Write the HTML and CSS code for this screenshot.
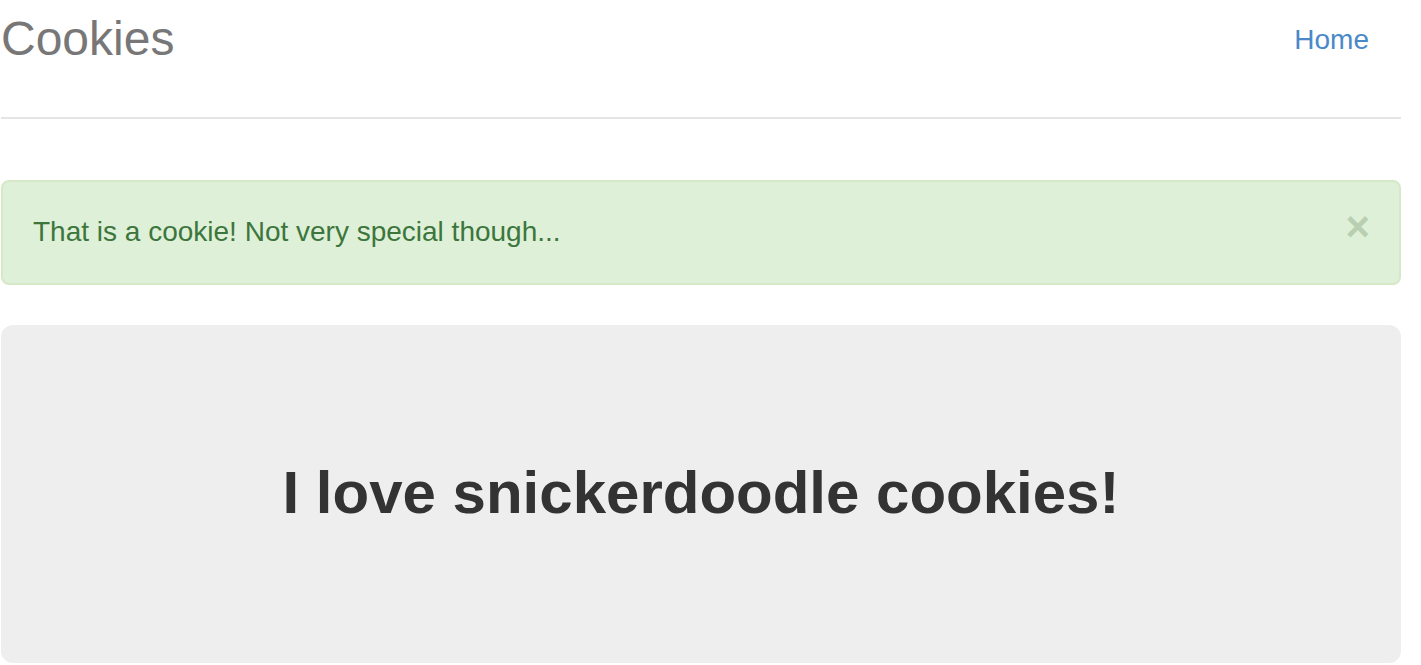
FILE: index.html
```html
<!DOCTYPE html>
<html lang="en">
<head>
<meta charset="utf-8">
<title>Cookies</title>
<link rel="stylesheet" href="styles.css">
</head>
<body>
<div class="container">
  <header class="header">
    <h3 class="brand">Cookies</h3>
    <nav>
      <ul class="nav">
        <li><a href="#">Home</a></li>
      </ul>
    </nav>
  </header>

  <div class="alert">
    <span class="alert-text">That is a cookie! Not very special though...</span>
    <button class="close" type="button" aria-label="Close">&times;</button>
  </div>

  <div class="jumbotron">
    <h1>I love snickerdoodle cookies!</h1>
  </div>
</div>
</body>
</html>
```

FILE: styles.css
```css
html, body {
  margin: 0;
  padding: 0;
  background: #fff;
}

body {
  font-family: "Liberation Sans", Arial, sans-serif;
  color: #333;
}

.container {
  width: 1400px;
  margin-left: 1px;
}

.header {
  display: flex;
  justify-content: space-between;
  align-items: flex-start;
  height: 78px;
  padding-bottom: 39px;
  border-bottom: 2px solid #e5e5e5;
  margin-bottom: 61px;
}

.brand {
  margin: 0;
  font-size: 48px;
  font-weight: 400;
  line-height: 78px;
  color: #777;
}

.nav {
  list-style: none;
  margin: 0;
  padding: 0;
}

.nav a {
  display: block;
  padding: 20px 32px 18px 30px;
  font-size: 28px;
  line-height: 40px;
  color: #4a89c8;
  text-decoration: none;
}

.alert {
  display: flex;
  justify-content: space-between;
  align-items: flex-start;
  padding: 30px 29px 29px 30px;
  border: 2px solid #d6e9c6;
  border-radius: 8px;
  background: #dff0d8;
  color: #3c763d;
  margin-bottom: 40px;
}

.alert-text {
  font-size: 28px;
  line-height: 40px;
}

.close {
  border: 0;
  background: transparent;
  padding: 0;
  margin: 0;
  font-family: "Liberation Sans", Arial, sans-serif;
  font-size: 42px;
  font-weight: 700;
  line-height: 1;
  color: #b9cfb1;
  cursor: pointer;
  position: relative;
  top: -6px;
}

.jumbotron {
  background: #eee;
  border-radius: 12px;
  padding: 135px 30px 137px;
  text-align: center;
}

.jumbotron h1 {
  margin: 0;
  font-size: 60px;
  font-weight: 700;
  line-height: 66px;
  color: #333;
}
```
